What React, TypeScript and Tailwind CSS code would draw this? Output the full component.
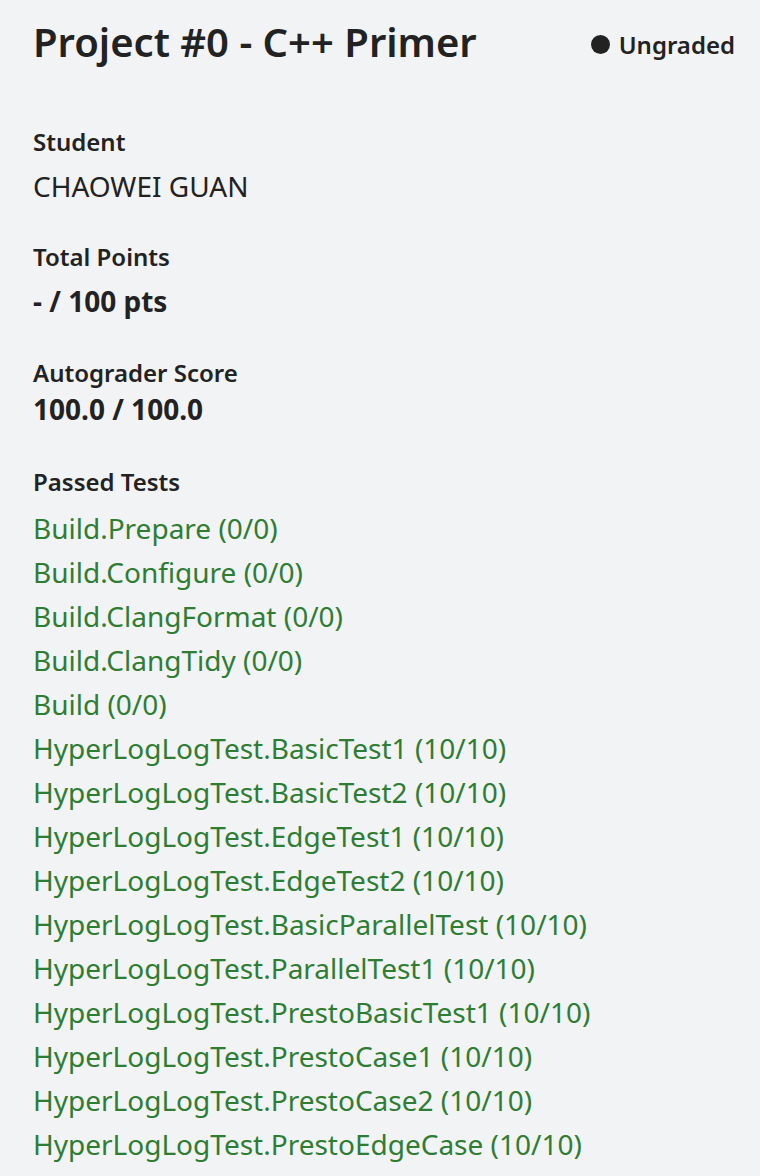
import React from "react";

const tests = [
  "Build.Prepare (0/0)",
  "Build.Configure (0/0)",
  "Build.ClangFormat (0/0)",
  "Build.ClangTidy (0/0)",
  "Build (0/0)",
  "HyperLogLogTest.BasicTest1 (10/10)",
  "HyperLogLogTest.BasicTest2 (10/10)",
  "HyperLogLogTest.EdgeTest1 (10/10)",
  "HyperLogLogTest.EdgeTest2 (10/10)",
  "HyperLogLogTest.BasicParallelTest (10/10)",
  "HyperLogLogTest.ParallelTest1 (10/10)",
  "HyperLogLogTest.PrestoBasicTest1 (10/10)",
  "HyperLogLogTest.PrestoCase1 (10/10)",
  "HyperLogLogTest.PrestoCase2 (10/10)",
  "HyperLogLogTest.PrestoEdgeCase (10/10)",
];

export default function App() {
  return (
    <div
      className="min-h-[1176px] w-[760px] bg-[#f2f3f5] pl-[33px] pr-[25px] pt-[18px] text-[#222222]"
      style={{ fontFamily: '"Noto Sans", "Open Sans", sans-serif' }}
    >
      <div className="flex items-center justify-between">
        <h1 className="text-[40px] font-semibold leading-[48px]">Project #0 - C++ Primer</h1>
        <div className="mt-[5px] flex items-center gap-[9px] text-[24px] font-semibold leading-[30px]">
          <span className="h-[19px] w-[19px] rounded-full bg-[#222222]" />
          <span>Ungraded</span>
        </div>
      </div>

      <div className="mt-[60px] text-[24px] font-semibold leading-[32px]">Student</div>
      <div className="mt-[8px] text-[28px] leading-[40px]">CHAOWEI GUAN</div>

      <div className="mt-[35px] text-[24px] font-semibold leading-[32px]">Total Points</div>
      <div className="mt-[8px] text-[28px] font-bold leading-[40px]">- / 100 pts</div>

      <div className="mt-[36px] text-[24px] font-semibold leading-[32px]">Autograder Score</div>
      <div className="text-[28px] font-bold leading-[40px]">100.0 / 100.0</div>

      <div className="mt-[37px] text-[24px] font-semibold leading-[32px]">Passed Tests</div>
      <ul className="mt-[8px] flex flex-col">
        {tests.map((t) => (
          <li key={t} className="text-[28px] leading-[44px] text-[#2e7d32]">
            {t}
          </li>
        ))}
      </ul>
    </div>
  );
}
